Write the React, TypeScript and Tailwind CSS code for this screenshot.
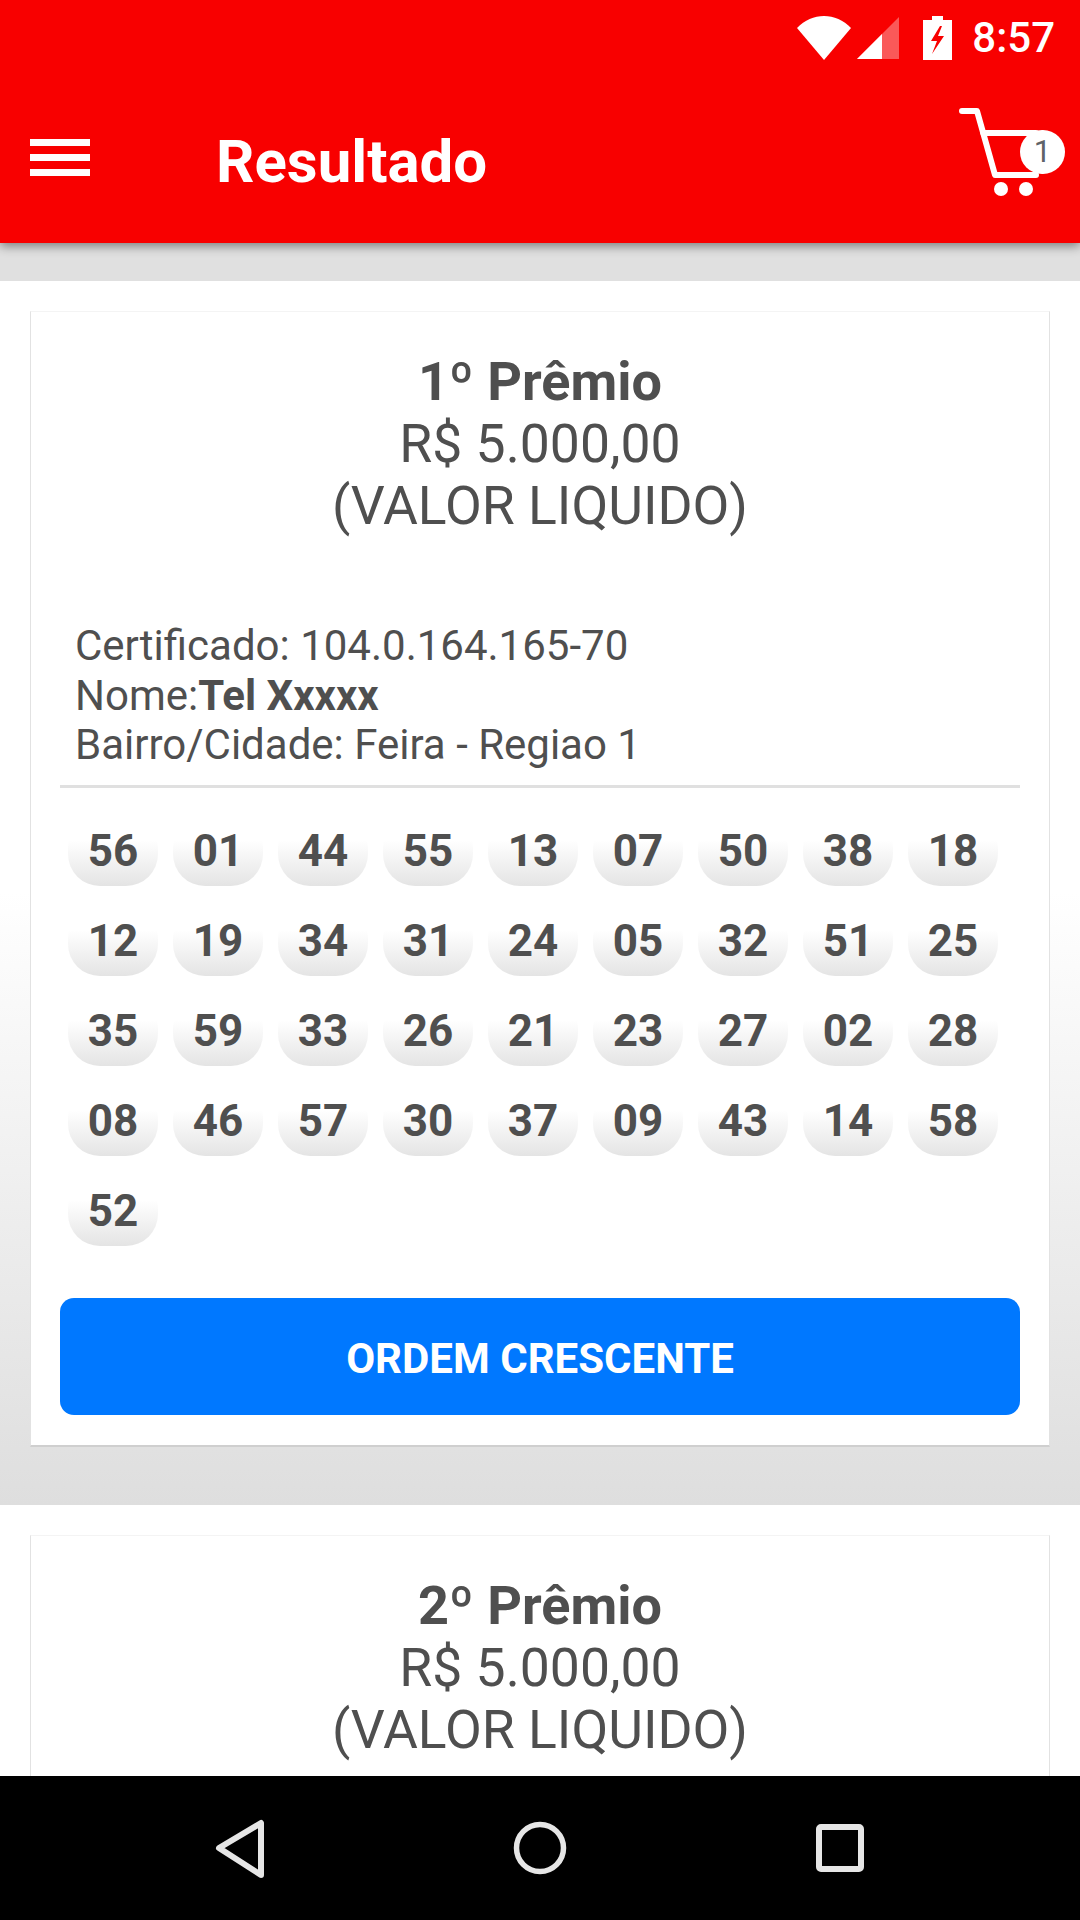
const numbers = ["56", "01", "44", "55", "13", "07", "50", "38", "18", "12", "19", "34", "31", "24", "05", "32", "51", "25", "35", "59", "33", "26", "21", "23", "27", "02", "28", "08", "46", "57", "30", "37", "09", "43", "14", "58", "52"];

const PrizeCard = (props: { title: string; numbers?: string[] }) => {
  return (
    <div className="bg-white mx-[30px] min-h-[300px] border-x border-x-[#e2e2e2] border-t border-t-[#f4f4f4] border-b-2 border-b-[#cfcfcf] px-[29px] pt-[38px] pb-[30px]">
      <div className="text-center text-[#4f4f4f] text-[53.5px] leading-[62px]">
        <div className="font-bold text-[54px] leading-[63px]">{props.title}</div>
        <div>R$ 5.000,00</div>
        <div>(VALOR LIQUIDO)</div>
      </div>
      {props.numbers && (
        <>
          <div className="mt-[84px] pl-[15px] pb-[15px] border-b-[3px] border-b-[#e0e0e0] text-[#4f4f4f] text-[42px] leading-[49.5px]">
            <div>Certificado: 104.0.164.165-70</div>
            <div>
              Nome:<span className="font-bold">Tel Xxxxx</span>
            </div>
            <div>Bairro/Cidade: Feira - Regiao 1</div>
          </div>
          <div className="flex flex-wrap gap-x-[15px] gap-y-[20px] pl-[8px] pt-[28px]">
            {props.numbers.map((n) => (
              <div
                key={n}
                className="w-[90px] h-[70px] flex items-center justify-center rounded-[32px] bg-linear-to-b from-white from-35% to-[#e4e4e4] text-[#4f4f4f] text-[44px] font-bold"
              >
                {n}
              </div>
            ))}
          </div>
          <button className="mt-[52px] w-full h-[117px] pt-[4px] rounded-[14px] bg-[#0078ff] text-white text-[42px] font-bold">
            ORDEM CRESCENTE
          </button>
        </>
      )}
    </div>
  );
};

const App = () => {
  return (
    <div className="w-[1080px] h-[1920px] flex flex-col overflow-hidden font-['Roboto',sans-serif] bg-white">
      <header className="relative z-10 h-[243px] shrink-0 bg-[#f80000] text-white shadow-[0_3px_10px_rgba(0,0,0,0.45)]">
        <div className="h-[75px] flex items-center justify-end pr-[25px]">
          <div className="flex items-center gap-[6px] mr-[24px]">
            <svg width="54" height="44" viewBox="0 0 54 44">
              <path d="M0 12 C15 -4 39 -4 54 12 L27 44 Z" fill="#fff" />
            </svg>
            <svg width="42" height="42" viewBox="0 0 42 42">
              <path d="M42 0 V42 H0 Z" fill="#fff" fillOpacity="0.35" />
              <path d="M25 17 V42 H0 Z" fill="#fff" />
            </svg>
          </div>
          <svg className="mr-[20px]" width="29" height="44" viewBox="0 0 29 44">
            <path
              d="M9 0 H20 V4 H29 V44 H0 V4 H9 Z M17 10 L8 25 H14 L9 38 L21 20 H15 L19 10 Z"
              fill="#fff"
              fillRule="evenodd"
            />
          </svg>
          <span className="text-[42px] font-medium leading-none">8:57</span>
        </div>
        <div className="relative h-[168px] flex items-start pl-[30px]">
          <div className="mt-[64px] w-[60px] flex flex-col gap-[8px]">
            <div className="h-[7px] bg-white" />
            <div className="h-[7px] bg-white" />
            <div className="h-[7px] bg-white" />
          </div>
          <h1 className="ml-[126px] mt-[52px] text-[60px] font-bold leading-[70px]">Resultado</h1>
          <svg className="absolute left-[958px] top-[30px]" width="82" height="94" viewBox="0 0 82 94">
            <path
              d="M4 6 H19 L37 70 H78 M25 28 H78"
              fill="none"
              stroke="#fff"
              strokeWidth="6"
              strokeLinecap="round"
              strokeLinejoin="round"
            />
            <circle cx="43" cy="84" r="7" fill="#fff" />
            <circle cx="68" cy="84" r="7" fill="#fff" />
          </svg>
          <div className="absolute left-[1020px] top-[55px] w-[45px] h-[44px] rounded-full bg-white flex items-center justify-center text-[#5f6368] text-[31px]">
            1
          </div>
        </div>
      </header>
      <main className="flex-1 overflow-hidden">
        <div className="h-[38px] bg-[#e0e0e0]" />
        <section className="h-[1224px] pt-[30px] bg-linear-to-b from-white from-50% to-[#dedede]">
          <PrizeCard title="1º Prêmio" numbers={numbers} />
        </section>
        <section className="pt-[30px]">
          <PrizeCard title="2º Prêmio" />
        </section>
      </main>
      <nav className="h-[144px] shrink-0 bg-black">
        <svg width="1080" height="144" viewBox="0 0 1080 144">
          <path
            d="M261 47 V99 L219 72 Z"
            fill="none"
            stroke="#e6e6e6"
            strokeWidth="6"
            strokeLinejoin="round"
          />
          <circle cx="540" cy="72" r="23.5" fill="none" stroke="#e6e6e6" strokeWidth="5.5" />
          <rect x="819" y="51" width="42" height="42" rx="2" fill="none" stroke="#e6e6e6" strokeWidth="6" />
        </svg>
      </nav>
    </div>
  );
};

export default App;
